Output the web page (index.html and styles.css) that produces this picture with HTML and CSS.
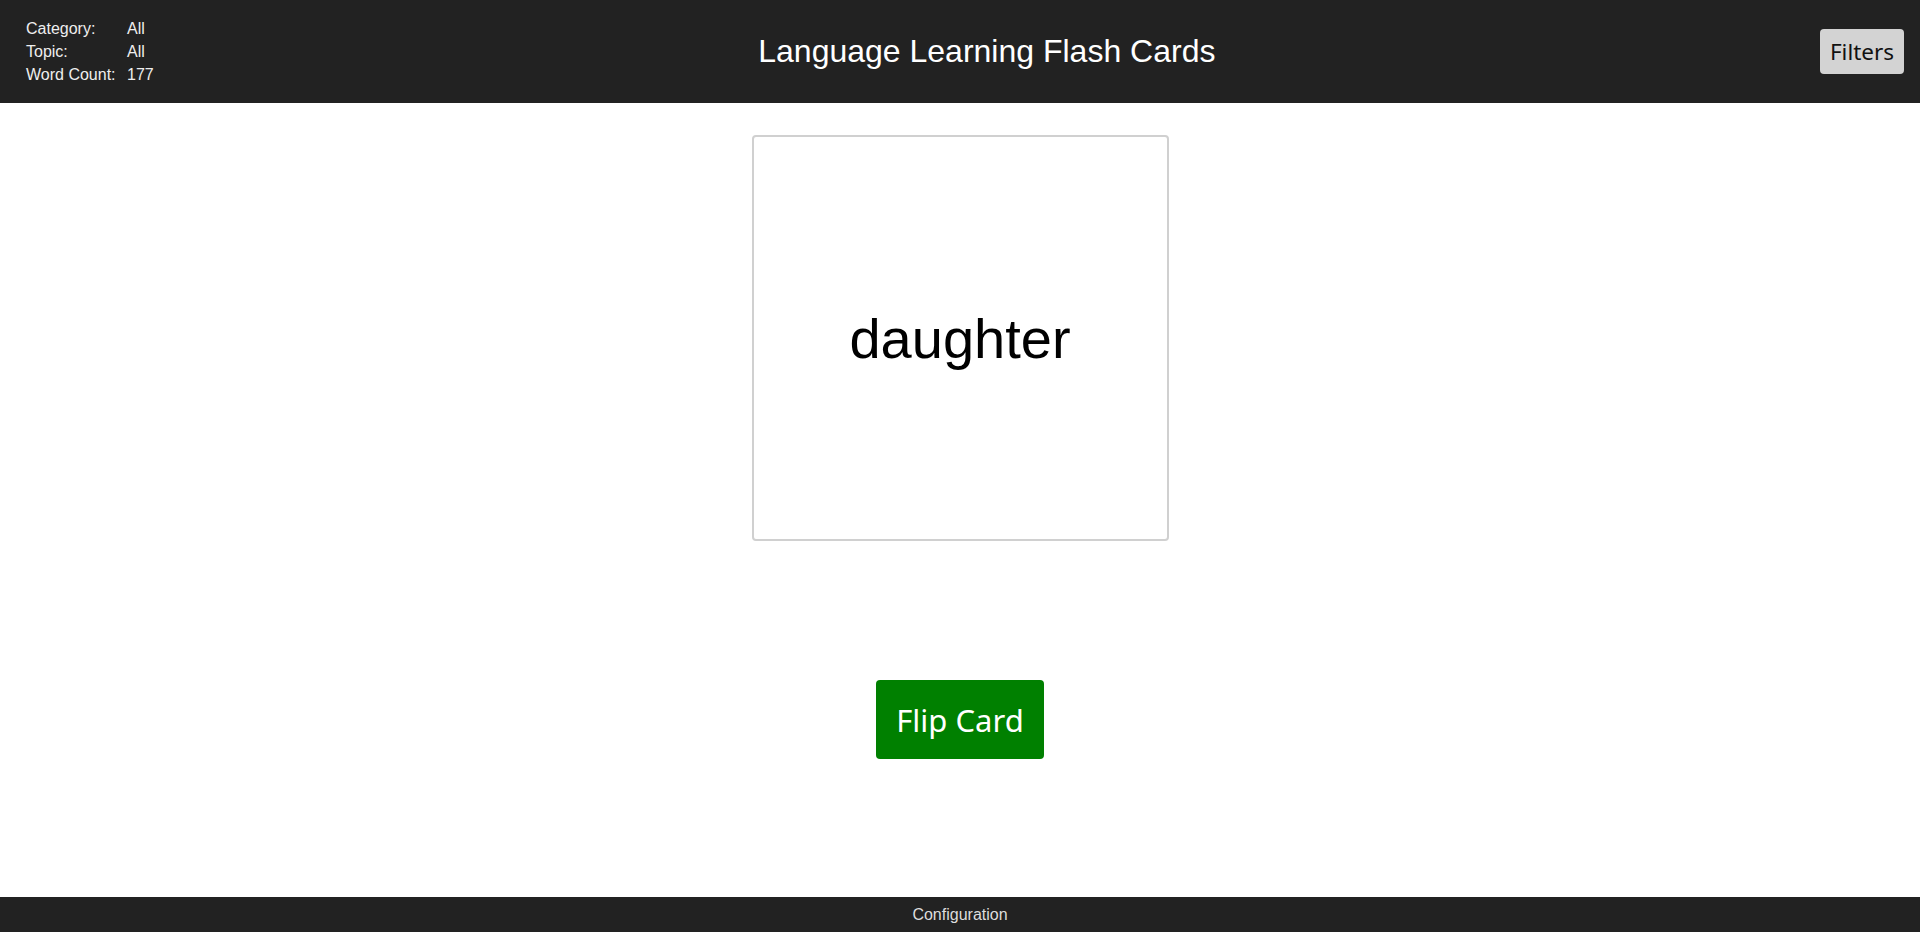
FILE: index.html
```html
<!DOCTYPE html>
<html lang="en">
<head>
<meta charset="utf-8">
<title>Language Learning Flash Cards</title>
<link rel="stylesheet" href="styles.css">
</head>
<body>
<div class="app">
  <header class="topbar">
    <div class="info">
      <span class="info-label">Category:</span><span class="info-value">All</span>
      <span class="info-label">Topic:</span><span class="info-value">All</span>
      <span class="info-label">Word Count:</span><span class="info-value">177</span>
    </div>
    <h1 class="title">Language Learning Flash Cards</h1>
    <button class="filters-btn" type="button">Filters</button>
  </header>
  <main class="main">
    <div class="card">
      <span class="card-word">daughter</span>
    </div>
    <button class="flip-btn" type="button">Flip Card</button>
  </main>
  <footer class="footer">Configuration</footer>
</div>
</body>
</html>
```
FILE: styles.css
```css
* {
  box-sizing: border-box;
}

html, body {
  margin: 0;
  padding: 0;
  height: 100%;
}

body {
  font-family: "Liberation Sans", Arial, sans-serif;
  background: #ffffff;
  color: #000;
}

.app {
  display: flex;
  flex-direction: column;
  min-height: 100vh;
}

.topbar {
  height: 103px;
  background: #222222;
  display: flex;
  align-items: center;
  padding: 0 16px 0 26px;
}

.info {
  display: grid;
  grid-template-columns: 101px auto;
  color: #eeeeee;
  font-size: 16px;
  line-height: 19px;
  row-gap: 4px;
  white-space: nowrap;
}

.title {
  flex: 1;
  margin: 0;
  text-align: center;
  color: #ffffff;
  font-weight: normal;
  font-size: 32px;
}

.filters-btn {
  font-family: "Noto Sans", sans-serif;
  font-size: 22.5px;
  background: #d3d3d3;
  color: #111;
  border: none;
  border-radius: 4px;
  width: 84px;
  height: 45px;
  padding: 0;
  cursor: pointer;
}

.main {
  flex: 1;
  display: flex;
  flex-direction: column;
  align-items: center;
  padding-top: 32px;
}

.card {
  width: 417px;
  height: 406px;
  border: 2px solid #d0d0d0;
  border-radius: 4px;
  display: flex;
  align-items: center;
  justify-content: center;
}

.card-word {
  font-size: 56px;
}

.flip-btn {
  margin-top: 139px;
  width: 168px;
  height: 79px;
  background: #008000;
  color: #ffffff;
  border: none;
  border-radius: 4px;
  font-family: "Noto Sans", sans-serif;
  font-size: 31px;
  padding: 0;
  cursor: pointer;
}

.footer {
  height: 35px;
  background: #222222;
  color: #dddddd;
  display: flex;
  align-items: center;
  justify-content: center;
  font-size: 16px;
}
```
